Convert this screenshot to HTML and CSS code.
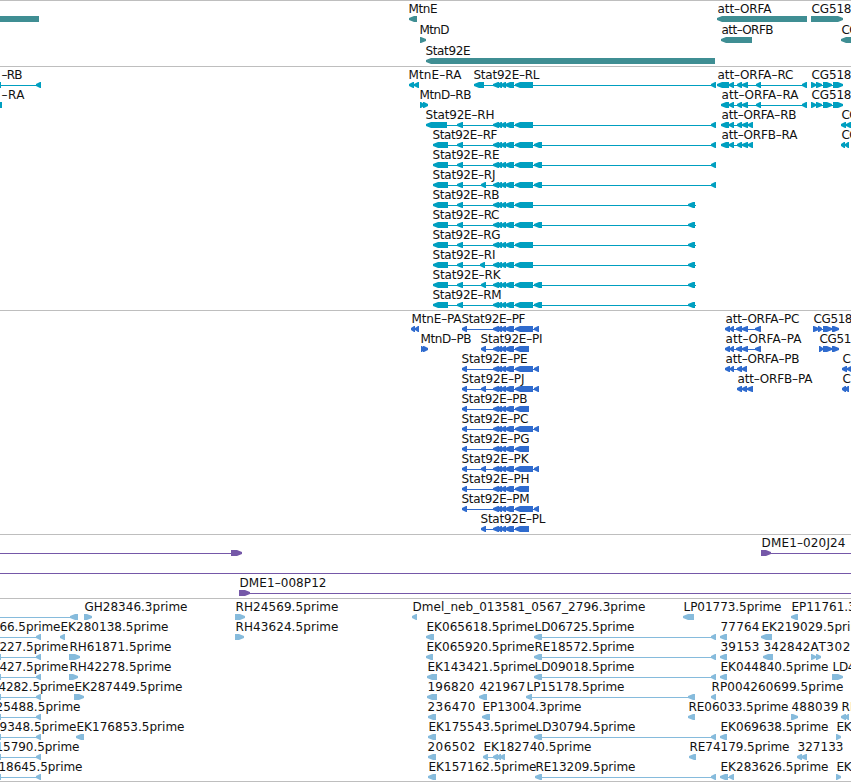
FILE: index.html
```
<!DOCTYPE html>
<html lang="en">
<head>
    <meta charset="UTF-8">
    <title>Genome browser</title>
    <link rel="stylesheet" href="styles.css">
</head>
<body>
    <main id="browser">
        <section class="track genes"></section>
        <section class="track transcripts"></section>
        <section class="track proteins"></section>
        <section class="track clones"></section>
        <section class="track ests"></section>
    </main>
    <script src="tracks.js"></script>
</body>
</html>
```
FILE: styles.css
```
body {
    margin: 0;
    background: #fff;
    overflow: hidden;
}
#browser {
    display: flex;
    flex-direction: column;
    width: 851px;
    height: 782px;
    box-sizing: border-box;
    border-bottom: 1px solid #bebebe;
}
.track {
    box-sizing: border-box;
    border-top: 1px solid #bebebe;
    overflow: hidden;
}
.track svg {
    display: block;
    width: 100%;
    height: 100%;
}
.track text {
    font-family: "DejaVu Sans", sans-serif;
    font-size: 12px;
    fill: #111;
}
.genes { height: 66px; color: #3f8e93; }
.transcripts { height: 244px; color: #009fc0; }
.proteins { height: 224px; color: #2f6bce; }
.clones { height: 64px; color: #7558a8; }
.ests { height: 183px; color: #86bbdc; }
.exon { fill: currentColor; }
.intron { fill: currentColor; shape-rendering: crispEdges; }
```
FILE: tracks.js
```
// feature: [row, strand, label, label start, label end, exons]
const core = [[493, 499], [497, 502], [501, 506], [505, 514]];
const rna = core.concat([[515, 533]]);
const cds = core.concat([[515, 529]]);
const tail = [[433, 448], [457, 463]];
const far = [[711, 716]];
const near = [[688, 695]];
const fifth = [[534, 542]];
const cdsLong = [[462, 467], ...rna, [534, 539]];
const cdsShort = [[462, 467], ...cds];
const left = [[-20, 1], [36, 41]];
const orf = [[721, 729], [729, 734], [737, 742], [742, 748]];
const cg = [[811, 816], [816, 822], [823, 832], [833, 843]];

const tracks = {
    genes: [
        [0, 0, '', 0, 0, [[-20, 39]]],
        [0, -1, 'MtnE', 409, 437, [[409, 417]]],
        [1, 1, 'MtnD', 420, 449, [[420, 426]]],
        [2, -1, 'Stat92E', 426, 470, [[426, 715]]],
        [0, -1, 'att-ORFA', 718, 771, [[717, 807]]],
        [1, -1, 'att-ORFB', 722, 773, [[721, 752]]],
        [0, 1, 'CG518', 812, 851, [[811, 843]]],
        [1, -1, 'CG', 842, 858, [[841, 870]]]
    ],
    transcripts: [
        [0, -1, '-RB', 2, 22, left],
        [1, -1, '-RA', 2, 24, [[-20, 2]]],
        [0, -1, 'MtnE-RA', 409, 461, [[409, 414], [414, 419]]],
        [0, -1, 'Stat92E-RL', 474, 539, [[474, 484], ...rna, ...far]],
        [1, 1, 'MtnD-RB', 420, 471, [[420, 424], [423, 428]]],
        [2, -1, 'Stat92E-RH', 426, 494, [[426, 447], [457, 463], ...rna, ...far]],
        [3, -1, 'Stat92E-RF', 433, 497, [...tail, ...rna, ...fifth, ...far]],
        [4, -1, 'Stat92E-RE', 433, 499, [...tail, ...rna, ...fifth, ...far]],
        [5, -1, 'Stat92E-RJ', 433, 495, [...tail, [481, 486], ...rna, ...fifth, ...far]],
        [6, -1, 'Stat92E-RB', 433, 499, [...tail, ...rna, ...near]],
        [7, -1, 'Stat92E-RC', 433, 499, [...tail, ...rna, ...fifth, ...near]],
        [8, -1, 'Stat92E-RG', 433, 500, [...tail, ...rna, ...near]],
        [9, -1, 'Stat92E-RI', 433, 495, [...tail, [480, 485], ...rna, ...near]],
        [10, -1, 'Stat92E-RK', 433, 500, [...tail, [481, 486], ...rna, ...fifth, ...near]],
        [11, -1, 'Stat92E-RM', 433, 501, [...tail, ...rna, ...fifth, ...near]],
        [0, -1, 'att-ORFA-RC', 718, 793, [[717, 729], [729, 734], [737, 742], [742, 748], [756, 761], [802, 807]]],
        [1, -1, 'att-ORFA-RA', 722, 798, [...orf, [756, 761], [802, 807]]],
        [2, -1, 'att-ORFA-RB', 722, 796, [...orf, [748, 753]]],
        [3, -1, 'att-ORFB-RA', 722, 797, [...orf, [748, 753]]],
        [0, 1, 'CG518', 812, 851, cg],
        [1, 1, 'CG518', 812, 851, cg],
        [2, -1, 'CG', 842, 858, [[841, 846], [846, 851], [851, 856]]],
        [3, -1, 'CG', 842, 858, [[841, 845], [845, 849]]]
    ],
    proteins: [
        [0, -1, 'MtnE-PA', 412, 461, [[411, 415], [415, 419]]],
        [1, 1, 'MtnD-PB', 421, 471, [[421, 424], [423, 428]]],
        [0, -1, 'Stat92E-PF', 462, 525, cdsLong],
        [1, -1, 'Stat92E-PI', 481, 542, [[481, 486], ...cds]],
        [2, -1, 'Stat92E-PE', 462, 527, cdsLong],
        [3, -1, 'Stat92E-PJ', 462, 524, [[481, 486], ...cdsLong]],
        [4, -1, 'Stat92E-PB', 462, 527, cdsShort],
        [5, -1, 'Stat92E-PC', 462, 528, cdsLong],
        [6, -1, 'Stat92E-PG', 462, 529, cdsShort],
        [7, -1, 'Stat92E-PK', 462, 528, [[481, 486], ...cdsLong]],
        [8, -1, 'Stat92E-PH', 462, 529, cdsShort],
        [9, -1, 'Stat92E-PM', 462, 529, cdsLong],
        [10, -1, 'Stat92E-PL', 481, 545, [[481, 486], ...cds]],
        [0, -1, 'att-ORFA-PC', 726, 799, [[725, 730], [730, 734], [736, 742], [742, 748], [755, 761]]],
        [1, -1, 'att-ORFA-PA', 726, 801, [[725, 730], [730, 734], [736, 742], [742, 748], [755, 761]]],
        [2, -1, 'att-ORFA-PB', 726, 799, [[725, 730], [730, 734], [737, 742], [742, 747]]],
        [3, -1, 'att-ORFB-PA', 738, 812, [[737, 742], [742, 747], [747, 753]]],
        [0, 1, 'CG518', 814, 852, [[813, 819], [818, 822], [823, 832], [832, 839]]],
        [1, 1, 'CG51', 820, 851, [[819, 823], [823, 832], [832, 839]]],
        [2, -1, 'CG', 843, 860, [[842, 847], [847, 852]]],
        [3, -1, 'CG', 843, 860, [[842, 846], [845, 849]]]
    ],
    clones: [
        [0, 1, '', 0, 0, [[-30, -10], [231, 242]]],
        [0, 1, 'DME1-020J24', 762, 845, [[761, 771], [880, 890]]],
        [1, 1, '', 0, 0, [[-30, -10], [880, 890]]],
        [2, 1, 'DME1-008P12', 240, 326, [[239, 250], [880, 890]]]
    ],
    ests: [
        [0, -1, '', 0, 0, [[-20, -9], [70, 78]]],
        [0, 1, 'GH28346.3prime', 85, 187, [[84, 92]]],
        [0, 1, 'RH24569.5prime', 236, 338, [[235, 245]]],
        [0, -1, 'Dmel_neb_013581_0567_2796.3prime', 413, 645, [[412, 417]]],
        [0, -1, 'LP01773.5prime', 684, 781, [[683, 694]]],
        [0, -1, 'EP11761.3prime', 792, 890, [[791, 798]]],
        [1, -1, '66.5prime', 0, 60, [[-20, -9], [36, 41]]],
        [1, -1, 'EK280138.5prime', 61, 168, [[60, 65]]],
        [1, 1, 'RH43624.5prime', 236, 338, [[235, 244]]],
        [1, -1, 'EK065618.5prime', 427, 534, [[426, 434]]],
        [1, -1, 'LD06725.5prime', 535, 634, [...fifth, ...far]],
        [1, -1, '77764', 721, 759, [[720, 727]]],
        [1, -1, 'EK219029.5prime', 762, 869, [[761, 772]]],
        [2, -1, '227.5prime', 0, 68, left],
        [2, 1, 'RH61871.5prime', 70, 171, [[69, 80]]],
        [2, -1, 'EK065920.5prime', 427, 534, [[426, 433]]],
        [2, -1, 'RE18572.5prime', 535, 634, [...fifth, ...far]],
        [2, -1, '39153', 721, 759, [[720, 727]]],
        [2, -1, '342842', 764, 810, [[763, 773]]],
        [2, 1, 'AT302', 811, 850, [[811, 816], [816, 821]]],
        [3, -1, '427.5prime', 0, 68, left],
        [3, 1, 'RH42278.5prime', 70, 171, [[69, 78]]],
        [3, -1, 'EK143421.5prime', 428, 535, [[427, 437]]],
        [3, -1, 'LD09018.5prime', 535, 634, [...fifth, ...far]],
        [3, -1, 'EK044840.5prime', 721, 828, [[720, 727]]],
        [3, 1, 'LD4', 833, 855, [[832, 843]]],
        [4, -1, '4282.5prime', -1, 74, left],
        [4, 1, 'EK287449.5prime', 75, 182, [[74, 84]]],
        [4, -1, '196820', 428, 474, [[427, 437]]],
        [4, -1, '421967', 480, 525, [[479, 487]]],
        [4, -1, 'LP15178.5prime', 527, 624, [[526, 532], [688, 695]]],
        [4, -1, 'RP004260699.5prime', 712, 843, [[711, 716]]],
        [5, -1, '25488.5prime', -4, 80, left],
        [5, -1, '236470', 428, 475, [[428, 436]]],
        [5, -1, 'EP13004.3prime', 483, 581, [[482, 490]]],
        [5, -1, 'RE06033.5prime', 689, 788, [[688, 695]]],
        [5, 1, '488039', 792, 838, [[791, 798]]],
        [5, -1, 'RE', 842, 857, [[841, 846], [845, 849]]],
        [6, -1, '9348.5prime', 0, 76, left],
        [6, -1, 'EK176853.5prime', 77, 184, [[76, 84]]],
        [6, -1, 'EK175543.5prime', 429, 536, [[428, 436]]],
        [6, -1, 'LD30794.5prime', 536, 635, [...fifth, ...far]],
        [6, -1, 'EK069638.5prime', 721, 828, [[720, 727]]],
        [6, 1, 'EK', 837, 851, [[836, 841]]],
        [7, -1, '15790.5prime', -4, 79, left],
        [7, -1, '206502', 428, 475, [[428, 436]]],
        [7, -1, 'EK182740.5prime', 484, 591, [[483, 488], [493, 498], [497, 501], [500, 505]]],
        [7, -1, 'RE74179.5prime', 690, 789, [[689, 696]]],
        [7, -1, '327133', 798, 843, [[797, 802], [801, 807]]],
        [8, -1, '18645.5prime', -1, 82, left],
        [8, -1, 'EK157162.5prime', 429, 536, [[428, 436]]],
        [8, -1, 'RE13209.5prime', 536, 635, [[535, 542], ...far]],
        [8, -1, 'EK283626.5prime', 721, 828, [[720, 728], [729, 734]]],
        [8, 1, 'EK', 837, 851, [[836, 841]]]
    ]
};

function exonPoints(a, b, y, strand) {
    if (strand === 0) return `${a},${y} ${b},${y} ${b},${y + 6} ${a},${y + 6}`;
    const head = Math.min(5, b - a - 1);
    const tip = strand < 0 ? a : b;
    const end = strand < 0 ? b : a;
    const neck = tip - strand * head;
    const mid = tip - strand * head / 2;
    return `${tip},${y + 2} ${mid},${y + 1} ${neck},${y} ${end},${y} ` +
        `${end},${y + 6} ${neck},${y + 6} ${mid},${y + 5} ${tip},${y + 4}`;
}

for (const name in tracks) {
    const pitch = name === 'genes' ? 21 : 20;
    let svg = '';
    tracks[name].forEach(([row, strand, label, start, end, exons]) => {
        const y = row * pitch + 15;
        const from = Math.min(...exons.map(e => e[0]));
        const to = Math.max(...exons.map(e => e[1])) + (exons.includes(near[0]) ? 1 : 0);
        if (exons.length > 1) {
            svg += `<rect class="intron" x="${from}" y="${y + 3}" width="${to - from}" height="1"/>`;
        }
        exons.forEach(([a, b]) => {
            svg += `<polygon class="exon" points="${exonPoints(a, b, y, strand)}"/>`;
        });
        if (label) {
            const text = label.replace(/-/g, '\u2013');
            svg += `<text x="${start - 0.5}" y="${y - 3}" textLength="${end - start + 1}">${text}</text>`;
        }
    });
    document.querySelector('.' + name).innerHTML = `<svg>${svg}</svg>`;
}
```
